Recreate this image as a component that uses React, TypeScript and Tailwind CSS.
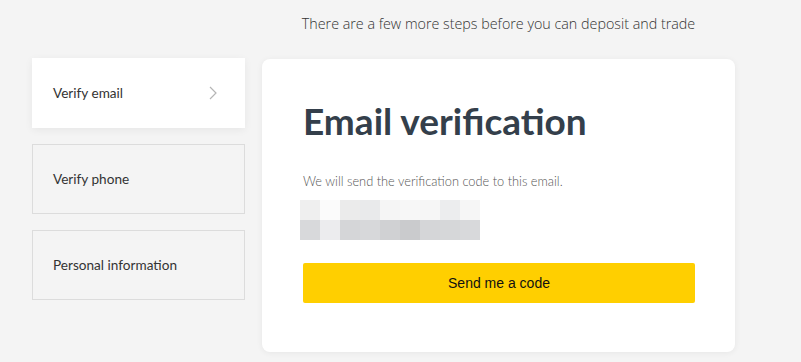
import React from "react";

const row1 = ["#efefef", "#fbfbfb", "#ebebeb", "#e9eaeb", "#f5f5f5", "#f7f7f7", "#f6f6f6", "#ecedee", "#f6f6f6"];
const row2 = ["#d8d9db", "#ececee", "#d5d6d8", "#d7d8da", "#d0d1d3", "#cacbcd", "#d5d6d8", "#d6d7d9", "#d8d9db"];

export default function App() {
  return (
    <div className="min-h-screen w-full bg-[#f4f4f4] font-['Lato',sans-serif]">
      <div className="flex gap-[17px] pl-[32px]">
        <div className="w-[213px] pt-[58px] flex flex-col gap-[16px]">
          <div className="h-[70px] bg-white shadow-[0_2px_8px_rgba(0,0,0,0.06)] flex items-center justify-between pl-[21px] pr-[28px]">
            <span className="text-[13.6px] text-[#333]">Verify email</span>
            <svg width="8" height="14" viewBox="0 0 8 14" fill="none">
              <path d="M1 1l6 6-6 6" stroke="#b5b5b5" strokeWidth="1.2" />
            </svg>
          </div>
          <div className="h-[70px] border border-[#dcdcdc] flex items-center pl-[20px]">
            <span className="text-[13.6px] text-[#333]">Verify phone</span>
          </div>
          <div className="h-[70px] border border-[#dcdcdc] flex items-center pl-[20px]">
            <span className="text-[13.6px] text-[#333]">Personal information</span>
          </div>
        </div>
        <div className="w-[473px] flex flex-col">
          <div className="h-[59px] flex items-start justify-center pt-[13px]">
            <span className="text-[14.3px] font-light text-[#333] font-['Open_Sans',sans-serif]">There are a few more steps before you can deposit and trade</span>
          </div>
          <div className="bg-white rounded-[8px] shadow-[0_1px_6px_rgba(0,0,0,0.06)] pl-[41px] pr-[40px] pt-[40px] pb-[49px]">
            <h1 className="text-[37px] font-bold text-[#343f4b] leading-[44px]">Email verification</h1>
            <p className="mt-[30px] text-[12.8px] font-light text-[#555] leading-[16px]">We will send the verification code to this email.</p>
            <div className="mt-[11px] -ml-[3px] flex flex-col">
              <div className="flex">
                {row1.map((c, i) => (
                  <div key={i} className="w-[20px] h-[20px]" style={{ background: c }} />
                ))}
              </div>
              <div className="flex">
                {row2.map((c, i) => (
                  <div key={i} className="w-[20px] h-[20px]" style={{ background: c }} />
                ))}
              </div>
            </div>
            <button className="mt-[23px] w-full h-[40px] bg-[#ffcf00] rounded-[2px] text-[14px] text-[#111] font-['Liberation_Sans',Arial,sans-serif]">
              Send me a code
            </button>
          </div>
        </div>
      </div>
    </div>
  );
}
